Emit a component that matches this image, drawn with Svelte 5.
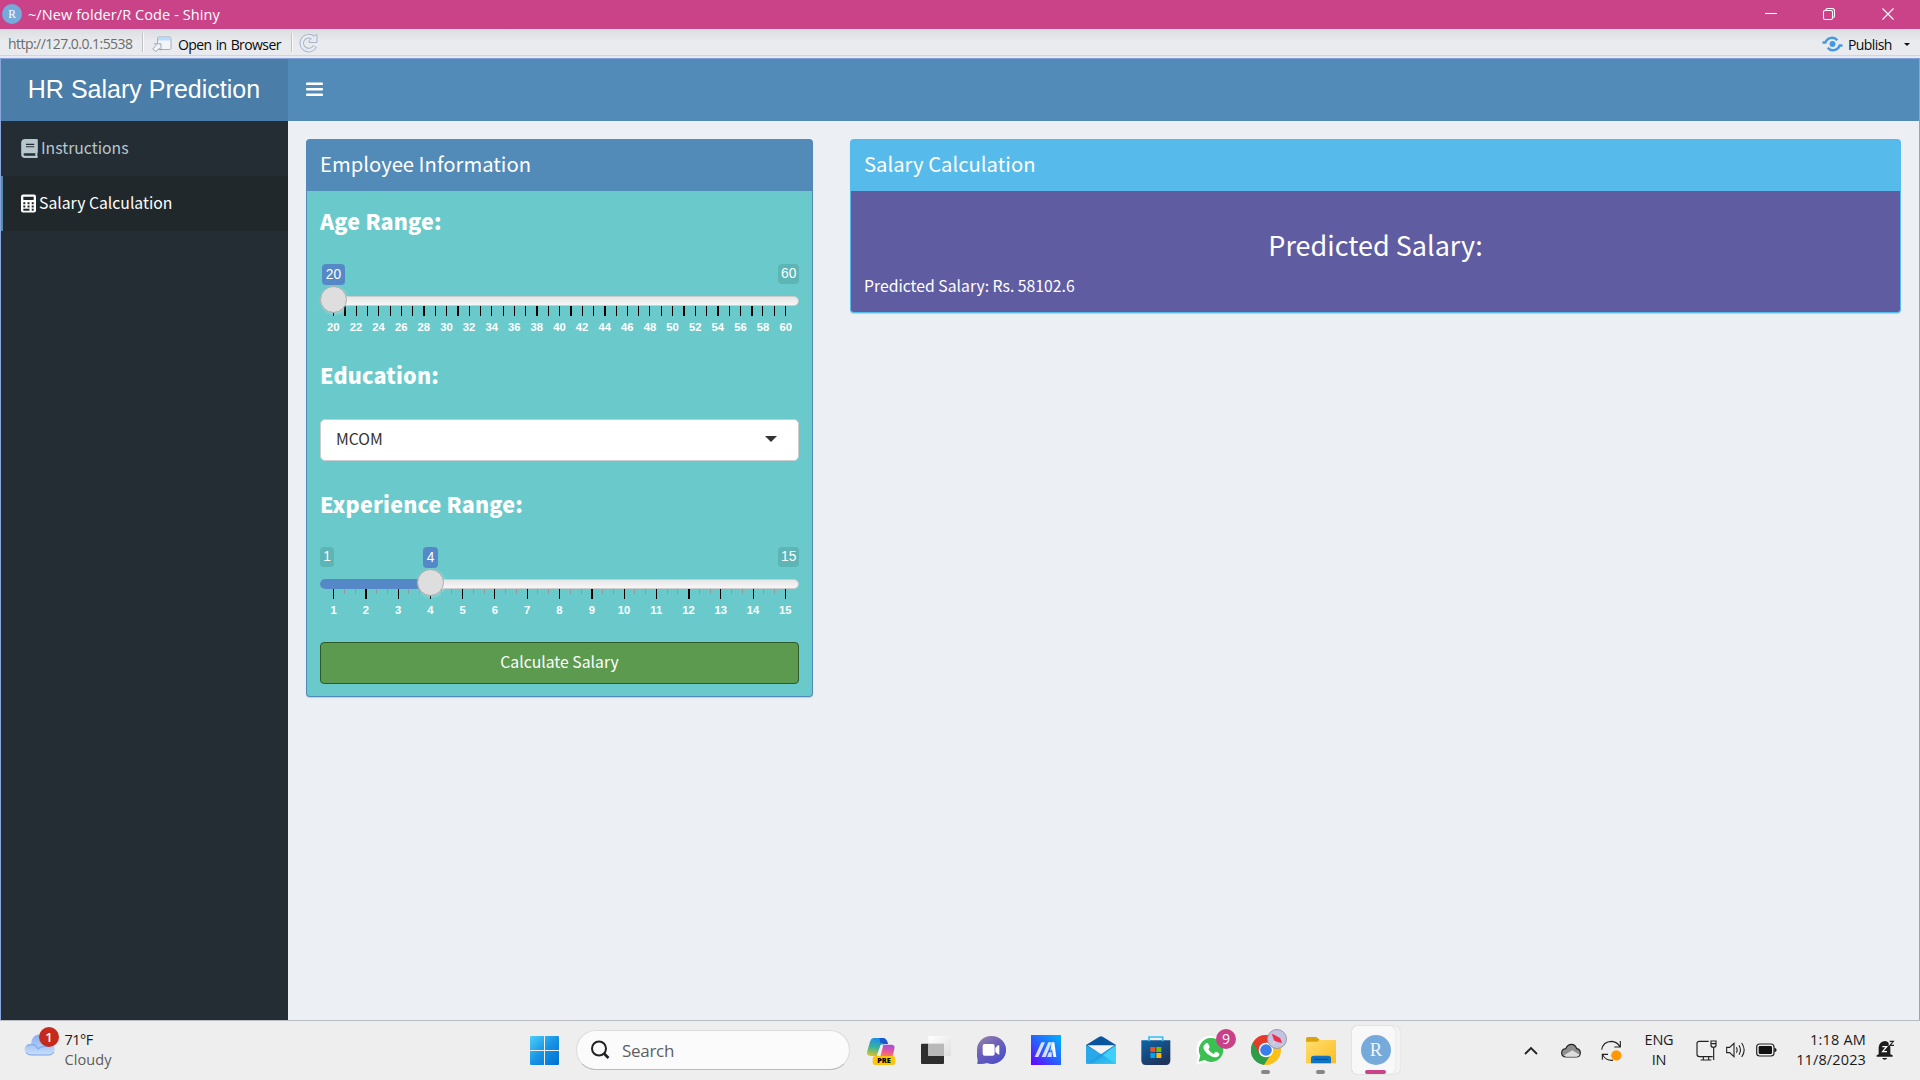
<script>
  const ageTicks = Array.from({ length: 41 }, (_, i) => i);
  const ageWide = [1, 8, 11, 18, 21, 24, 31, 34, 37];
  const ageLabels = Array.from({ length: 21 }, (_, i) => 20 + i * 2);
  const expTicks = Array.from({ length: 43 }, (_, i) => i);
  const expWide = [3, 24, 33];
  const expLabels = Array.from({ length: 15 }, (_, i) => i + 1);
</script>

<div class="screen">
  <header class="titlebar">
    <svg class="rlogo" viewBox="0 0 20 20"><circle cx="10" cy="10" r="10" fill="#75aadb" /><text x="10" y="14" text-anchor="middle" font-size="11.5" fill="#fff">R</text></svg>
    <span class="wintitle">~/New folder/R Code - Shiny</span>
    <svg class="winctl" viewBox="0 0 140 29" fill="none" stroke="#fff" stroke-width="1.1">
      <path d="M5 13.5H17" />
      <rect x="63.5" y="10.5" width="9" height="9" rx="1.5" />
      <path d="M66 10V9.500Q66 8.500 67.500 8.500H72Q74.500 8.500 74.500 11V16Q74.500 17.500 73 17.500" />
      <path d="M122.500 8.500L133.500 19.500M133.500 8.500L122.500 19.500" />
    </svg>
  </header>

  <div class="toolbar">
    <span class="url">http://127.0.0.1:5538</span>
    <i class="sep"></i>
    <svg class="open-ico" viewBox="0 0 20 16">
      <rect x="5.500" y="1" width="13.500" height="12.500" rx="1.500" fill="#f3f5f8" stroke="#a0adbd" />
      <rect x="6" y="1.500" width="12.500" height="3" fill="#b9dcfa" />
      <path d="M.700 13L4.200 9.500L2.500 7.800H9V14.200L7.300 12.500L3.700 15.500Z" fill="#f2f4f7" stroke="#95a1b0" stroke-width=".9" />
    </svg>
    <span class="open">Open in Browser</span>
    <i class="sep second"></i>
    <svg class="reload" viewBox="0 0 20 20" fill="none">
      <path d="M14.500 5A7 7 0 1 0 16 13.300" stroke="#a9b5c6" stroke-width="4.600" />
      <path d="M18 1.500V9.500H10V7.500L12.500 5.500L15 3Z" fill="#e3eaf4" stroke="#a9b5c6" />
      <path d="M14 4.600A7 7 0 1 0 15.700 13.800" stroke="#e7edf6" stroke-width="2.600" />
    </svg>
    <div class="publish">
      <svg class="pub-ico" viewBox="0 0 22 16" fill="none" stroke="#4499e6" stroke-width="2.600">
        <path d="M.500 6.500H3.500C6 .500 13 .200 16 4" /><path d="M21.500 9.500H18.500C16 15.500 9 15.800 6 12" />
        <circle cx="11" cy="8" r="3.100" fill="#4499e6" stroke="none" />
      </svg>
      <span class="pub">Publish</span>
      <i class="tiny-caret"></i>
    </div>
  </div>

  <main class="app">
    <nav class="side">
      <div class="brand">HR Salary Prediction</div>
      <div class="item">
        <svg viewBox="0 0 448 512" width="17" height="19" fill="currentColor"><path d="M448 360V24c0-13.300-10.700-24-24-24H96C43 0 0 43 0 96v320c0 53 43 96 96 96h328c13.300 0 24-10.700 24-24v-16c0-7.500-3.500-14.300-8.900-18.700-4.200-15.400-4.200-59.300 0-74.700 5.400-4.300 8.900-11.100 8.900-18.600zM128 134c0-3.300 2.700-6 6-6h212c3.300 0 6 2.700 6 6v20c0 3.300-2.700 6-6 6H134c-3.300 0-6-2.700-6-6v-20zm0 64c0-3.300 2.700-6 6-6h212c3.300 0 6 2.700 6 6v20c0 3.300-2.700 6-6 6H134c-3.300 0-6-2.700-6-6v-20zm253.400 250H96c-17.700 0-32-14.300-32-32 0-17.600 14.400-32 32-32h285.400c-1.900 17.100-1.900 46.900 0 64z" /></svg>
        <span class="t-ins">Instructions</span>
      </div>
      <div class="item active">
        <svg viewBox="0 0 15 19" width="15" height="19"><rect y=".5" width="15" height="18" rx="2" fill="#fff" /><g fill="#1e282c"><rect x="2.300" y="2.700" width="10.400" height="3.200" rx=".4" /><rect x="2.300" y="8.200" width="2" height="2" /><rect x="6.500" y="8.200" width="2" height="2" /><rect x="10.700" y="8.200" width="2" height="2" /><rect x="2.300" y="11.500" width="2" height="2" /><rect x="6.500" y="11.500" width="2" height="2" /><rect x="10.700" y="11.500" width="2" height="2" /><rect x="2.300" y="14.700" width="6.200" height="2" /><rect x="10.700" y="14.700" width="2" height="2" /></g></svg>
        <span class="t-sal">Salary Calculation</span>
      </div>
    </nav>

    <div class="right">
      <div class="navbar"><svg width="17" height="15" viewBox="0 0 17 15" fill="#fff"><rect y=".5" width="17" height="2.500" rx=".8" /><rect y="6" width="17" height="2.500" rx=".8" /><rect y="11.500" width="17" height="2.500" rx=".8" /></svg></div>
      <div class="content">
        <section class="box employee">
          <h3 class="bh">Employee Information</h3>
          <div class="body">
            <h4 class="lbl age">Age Range:</h4>
            <div class="slider">
              <div class="bubbles"><span class="cur b-age">20</span><span class="lim end">60</span></div>
              <div class="track"><i class="handle h-age"></i></div>
              <svg class="ticks" width="479" height="10" shape-rendering="crispEdges">
                {#each ageTicks as i}
                  <rect x={Math.floor(13.5 + i * 11.3)} y="0" width={ageWide.includes(i) ? 2 : 1} height="10" fill="#000" />
                {/each}
              </svg>
              <div class="nums n21">{#each ageLabels as n}<span>{n}</span>{/each}</div>
            </div>
            <h4 class="lbl edu">Education:</h4>
            <div class="select"><span>MCOM</span><i class="caret"></i></div>
            <h4 class="lbl exp">Experience Range:</h4>
            <div class="slider">
              <div class="bubbles"><span class="lim">1</span><span class="cur b-exp">4</span><span class="lim end">15</span></div>
              <div class="track"><i class="fill"></i><i class="handle h-exp"></i></div>
              <svg class="ticks" width="479" height="10" shape-rendering="crispEdges">
                {#each expTicks as i}
                  <rect x={Math.floor(13.5 + i * 10.762)} y="0" width={expWide.includes(i) ? 2 : 1} height={i % 3 ? 5 : 10} fill={i % 3 ? '#999' : '#000'} />
                {/each}
              </svg>
              <div class="nums n15">{#each expLabels as n}<span>{n}</span>{/each}</div>
            </div>
            <button class="calc">Calculate Salary</button>
          </div>
        </section>

        <section class="box result">
          <h3 class="bh">Salary Calculation</h3>
          <div class="body">
            <h2>Predicted Salary:</h2>
            <p>Predicted Salary: Rs. 58102.6</p>
          </div>
        </section>
      </div>
    </div>
  </main>

  <footer class="taskbar">
    <div class="weather">
      <svg width="32" height="32" viewBox="0 0 96 96">
        <defs><linearGradient id="cl" x1="0" y1="0" x2="0" y2="1"><stop offset="0" stop-color="#88aef0" /><stop offset="1" stop-color="#c8defa" /></linearGradient></defs>
        <path d="M22 56C20 32 40 20 56 28C70 32 74 42 74 52C88 54 92 64 92 70C92 82 84 88 76 88H20C8 88 2 80 2 70C2 60 10 54 22 56Z" fill="url(#cl)" />
        <path d="M8 60C20 50 36 56 42 68C50 62 62 60 74 62" fill="none" stroke="#6f9be8" stroke-width="4" opacity=".7" />
        <path d="M6 80Q12 87 22 87H76Q86 86 90 78" fill="none" stroke="#7aa5ea" stroke-width="3" />
      </svg>
      <b class="wbadge">1</b>
      <div class="wtext"><span class="deg">71°F</span><span class="dim">Cloudy</span></div>
    </div>

    <div class="start">
      <svg width="29" height="29" viewBox="0 0 87 87"><defs><linearGradient id="wn" x1="0" y1="0" x2="1" y2="1" ><stop offset="0" stop-color="#4cd0fb" /><stop offset=".5" stop-color="#1793e4" /><stop offset="1" stop-color="#0070d0" /></linearGradient></defs><path d="M2 0H42V42H0V2ZM45 0H85L87 2V42H45ZM0 45H42V87H2L0 85ZM45 45H87V85L85 87H45Z" fill="url(#wn)" /></svg>
    </div>
    <div class="search">
      <svg width="20" height="20" viewBox="0 0 20 20" fill="none" stroke="#222"><circle cx="9" cy="8.500" r="7" stroke-width="2" /><path d="M14 13.500L18.500 18" stroke-width="2.600" /></svg>
      <span>Search</span>
    </div>

    <div class="apps">
      <div class="cell">
        <svg width="30" height="30" viewBox="0 0 90 90">
          <defs>
            <linearGradient id="c1" x1=".3" y1="0" x2=".1" y2="1"><stop offset="0" stop-color="#1c8fe8" /><stop offset=".5" stop-color="#3db39a" /><stop offset="1" stop-color="#e6c31e" /></linearGradient>
            <linearGradient id="c2" x1=".5" y1="0" x2=".3" y2="1"><stop offset="0" stop-color="#a54de0" /><stop offset=".5" stop-color="#e0549f" /><stop offset="1" stop-color="#ff7a5c" /></linearGradient>
          </defs>
          <path d="M22 9H52Q62 10 66 27H55Q48 27 45 36L38 63H14Q0 62 4 48L12 20Q15 10 22 9Z" fill="url(#c1)" />
          <path d="M40 9H52Q62 10 66 27H52Q46 20 44 27Z" fill="#1b57cf" />
          <path d="M50 29H76Q88 29 85 42L80 63H42Z" fill="url(#c2)" />
          <path d="M44 29H52L44 62H32Z" fill="#efeef0" />
          <rect x="20" y="63" width="68" height="27" rx="8" fill="#fdc40c" />
          <text x="54" y="85" text-anchor="middle" class="pre" font-size="22">PRE</text>
        </svg>
      </div>
      <div class="cell">
        <svg width="30" height="30" viewBox="0 0 90 90">
          <defs><linearGradient id="tv" x1="0" y1="0" x2="1" y2="1"><stop offset="0" stop-color="#fff" /><stop offset="1" stop-color="#dedede" /></linearGradient></defs>
          <rect x="0" y="26" width="69" height="61" rx="3" fill="#2e2e2e" /><rect x="22" y="3" width="68" height="60" rx="2" fill="url(#tv)" />
          <rect x="22" y="26" width="47" height="37" fill="#b9b9b9" />
        </svg>
      </div>
      <div class="cell">
        <svg width="30" height="30" viewBox="0 0 90 90">
          <defs><linearGradient id="mt" x1="0" y1="0" x2=".6" y2="1"><stop offset="0" stop-color="#9c84a8" /><stop offset=".5" stop-color="#6b62b8" /><stop offset="1" stop-color="#504fc9" /></linearGradient></defs>
          <path d="M45 3A42 42 0 1 1 33 84Q22 88 3 86Q7 78 3 66L3 45A42 42 0 0 1 45 3Z" fill="url(#mt)" />
          <rect x="20" y="27" width="36" height="35" rx="6" fill="#fff" /><path d="M58 39L66 31Q70 29 70 34V56Q70 61 66 58L58 51Z" fill="#fff" />
        </svg>
      </div>
      <div class="cell">
        <svg width="30" height="30" viewBox="0 0 90 90">
          <defs><linearGradient id="as" x1="0" y1="1" x2="1" y2="0"><stop offset="0" stop-color="#6a00ff" /><stop offset=".5" stop-color="#2664ff" /><stop offset="1" stop-color="#00b4ff" /></linearGradient></defs>
          <rect width="90" height="90" fill="url(#as)" />
          <path d="M31 22H42L22 66H11ZM52 22H62L44 66H32Z" fill="#fff" opacity=".8" /><path d="M62 22H70L76 66H67L63 42L58 50Z" fill="#fff" opacity=".95" /><path d="M54 52H62V66H48Z" fill="#fff" opacity=".8" />
        </svg>
      </div>
      <div class="cell">
        <svg width="30" height="30" viewBox="0 0 90 90">
          <defs><linearGradient id="ml" x1="0" y1="0" x2="1" y2="1"><stop offset="0" stop-color="#1581d8" /><stop offset="1" stop-color="#2ec4f6" /></linearGradient></defs>
          <path d="M0 30L40 5Q45 2 50 5L90 30V50H0Z" fill="#0a569e" /><path d="M4 31H86L45 58Z" fill="#f4f4f4" />
          <path d="M0 30L45 57L90 30V86H0Z" fill="#2aa9ea" /><path d="M90 30L20 86H90Z" fill="#3fd0fa" /><path d="M0 86L45 57L90 86Z" fill="url(#ml)" opacity=".7" />
        </svg>
      </div>
      <div class="cell">
        <svg width="30" height="30" viewBox="0 0 90 90">
          <defs><linearGradient id="st" x1="0" y1="0" x2=".6" y2="1"><stop offset="0" stop-color="#0c66a8" /><stop offset="1" stop-color="#20335c" /></linearGradient></defs>
          <path d="M1 16H88V76Q88 90 75 90H14Q1 90 1 76Z" fill="url(#st)" /><path d="M24 19V6H65V19" fill="none" stroke="#37bdf3" stroke-width="5" />
          <path d="M28 36H43V51H28Z" fill="#f25022" /><path d="M46 36H61V51H46Z" fill="#7fba00" /><path d="M28 54H43V69H28Z" fill="#00a4ef" /><path d="M46 54H61V69H46Z" fill="#ffb900" />
        </svg>
      </div>
      <div class="cell">
        <svg width="30" height="30" viewBox="0 0 90 90">
          <path d="M46 3A41 41 0 1 1 25 82L0 89L7 65A41 41 0 0 1 46 3Z" fill="#fff" /><path d="M46 9A36 36 0 1 1 26 75L8 80L13 62A36 36 0 0 1 46 9Z" fill="#3bc052" />
          <path d="M30 25Q35 22 37 27L41 36Q41 39 37 43Q43 54 53 57L58 51Q61 49 69 55Q72 57 68 63Q61 70 49 65Q31 58 23 42Q20 32 30 25Z" fill="#fff" />
        </svg>
        <span class="nine">9</span>
      </div>
      <div class="cell">
        <svg width="30" height="30" viewBox="0 0 90 90">
          <circle cx="45" cy="45" r="45" fill="#fbc116" /><path d="M45 45L6 22A45 45 0 0 0 39 90L58 60Z" fill="#2d9d47" />
          <path d="M6 22A45 45 0 0 1 84 23H45V45L25 56Z" fill="#e33b2e" /><circle cx="45" cy="45" r="22" fill="#fff" /><circle cx="45" cy="45" r="17.500" fill="#3b7ded" />
        </svg>
        <svg class="profile" width="20" height="20" viewBox="0 0 60 60"><circle cx="30" cy="30" r="28.500" fill="#c3c4e2" stroke="#979aa8" stroke-width="3" /><path d="M14 15L22 17L40 28L45 42L34 40L22 35Z" fill="#f02f4c" /><path d="M24 36L18 46" stroke="#eee" stroke-width="2" /></svg>
        <i class="run"></i>
      </div>
      <div class="cell">
        <svg width="30" height="30" viewBox="0 0 90 90">
          <defs><linearGradient id="fd" x1="0" y1="0" x2="1" y2="1"><stop offset="0" stop-color="#ffdf70" /><stop offset="1" stop-color="#fcbc22" /></linearGradient></defs>
          <path d="M0 12Q0 6 6 6H28Q32 6 36 10L42 16V30H0Z" fill="#dba20e" /><path d="M0 20H34L40 15H90V85H0Z" fill="url(#fd)" />
          <path d="M15 85V70Q15 62 23 62H67Q75 62 75 70V85Z" fill="#0f74c4" /><path d="M25 73H65" stroke="#074b85" stroke-width="3" />
        </svg>
        <i class="run"></i>
      </div>
      <div class="cell">
        <i class="tile back"></i><i class="tile"></i>
        <svg class="front" width="30" height="30" viewBox="0 0 30 30"><circle cx="15" cy="15" r="15" fill="#75aadb" /><text x="15" y="20.800" text-anchor="middle" font-size="18.500" fill="#f2f6fa">R</text></svg>
        <i class="run on"></i>
      </div>
    </div>

    <div class="tray">
      <div class="ti"><svg width="14" height="9" viewBox="0 0 14 9" fill="none" stroke="#222" stroke-width="1.800"><path d="M1 8L7 2L13 8" /></svg></div>
      <div class="ti"><svg width="20" height="15" viewBox="0 0 60 45"><path d="M15 42Q2 41 2 29Q3 18 14 17Q20 3 33 4Q44 6 47 17Q58 19 58 30Q57 42 46 42Z" fill="#8f8f8f" stroke="#222" stroke-width="3.500" /><path d="M9 37L34 22L56 35Q52 41 46 41H15Z" fill="#dcdcdc" /></svg></div>
      <div class="ti"><svg width="21" height="21" viewBox="0 0 63 63" fill="none" stroke="#222" stroke-width="3.300"><path d="M2 29Q6 5 32 4Q48 5 57 20M58 3V21H40" /><path d="M36 61Q12 62 5 44M4 59V43H21" /><circle cx="46" cy="46" r="15.500" fill="#ff9800" stroke="none" /></svg></div>
      <div class="lang"><span>ENG</span><span>IN</span></div>
      <div class="ti s"><svg width="21" height="21" viewBox="0 0 63 63" fill="none" stroke="#222" stroke-width="3.500"><path d="M38 4H10Q3 4 3 10V43Q3 50 10 50H50M22 50V60M38 50V60M14 60H46" /><path d="M45 3H60V16Q60 22 52 22Q45 22 45 16ZM53 22V60M45 11H60" /></svg></div>
      <div class="ti s"><svg width="20" height="18" viewBox="0 0 60 54" fill="none" stroke="#222" stroke-width="3.300"><path d="M2 19H11L24 7V47L11 35H2Z" /><path d="M31 19Q36 27 31 35M39 13Q48 27 39 41M47 6Q62 27 47 48" /></svg></div>
      <div class="ti s"><svg width="21" height="14" viewBox="0 0 63 42"><rect x="2" y="3" width="52" height="36" rx="9" fill="none" stroke="#222" stroke-width="3.500" /><rect x="8" y="9" width="40" height="24" rx="4" fill="#111" /><path d="M55 14Q62 15 62 21Q62 27 55 28Z" fill="#222" /></svg></div>
      <div class="clock"><span class="time">1:18 AM</span><span>11/8/2023</span></div>
      <div class="ti bell"><svg width="19" height="20" viewBox="0 0 57 60"><path d="M8 43V22Q10 4 28 3Q42 5 43 22V43L50 46V50H2V46Z" fill="#1c1c1c" /><path d="M18 54H34Q31 59 26 59Q21 59 18 54Z" fill="#1c1c1c" /><path d="M38 1H57V18H38Z" fill="#eee" /><path d="M19 20H32L20 35H33" fill="none" stroke="#fff" stroke-width="4" /><path d="M41 4H52L42 16H54" fill="none" stroke="#222" stroke-width="3.500" /></svg></div>
    </div>
  </footer>
</div>

<style>
  :global(body) { margin: 0; overflow: hidden; }
  * { box-sizing: border-box; }
  h2, h3, h4, p { margin: 0; }
  i { display: block; flex: none; }
  svg { display: block; flex: none; }
  svg text { font-family: "Liberation Serif", serif; }
  svg text.pre { font-family: "Open Sans", sans-serif; font-weight: 800; }
  span { white-space: nowrap; }
  .screen { width: 1920px; height: 1080px; display: flex; flex-direction: column; background: #ecf0f5; font-family: "Open Sans", sans-serif; overflow: hidden; }

  .titlebar { height: 29px; flex: none; background: #ca4389; display: flex; align-items: center; padding-left: 2px; color: #fff; }
  .rlogo { width: 20px; height: 20px; margin-top: -1px; }
  .wintitle { font-size: 14.5px; line-height: 29px; margin-left: 6px; letter-spacing: 0.08px; }
  .winctl { width: 140px; height: 29px; margin-left: auto; margin-right: 20px; }

  .toolbar { height: 30px; flex: none; background: linear-gradient(#dcdde1, #e9ebee 45%, #e9ebee); display: flex; align-items: center; padding: 0 0 3px 8px; border-bottom: 1px solid #849fd6; box-shadow: inset 0 -2px 0 #e6e8f2, inset 0 -3px 0 #d2d4dc; }
  .url { width: 126px; margin-top: 3px; font-size: 14px; line-height: 26px; color: #6c6c6c; letter-spacing: -0.54px; }
  .sep { width: 2px; height: 19px; background: linear-gradient(90deg, #c0c2c6 50%, #fafafa 50%); margin-left: 8px; }
  .open-ico { width: 20px; height: 16px; margin-left: 8px; margin-top: 4px; }
  .open { width: 106px; margin: 6px 0 0 6px; font-size: 14px; line-height: 26px; color: #0a0a0a; letter-spacing: -0.58px; word-spacing: 1px; }
  .sep.second { margin-left: 7px; }
  .reload { width: 20px; height: 20px; margin-left: 6px; margin-top: 2px; }
  .publish { margin-left: auto; display: flex; align-items: center; width: 98px; }
  .pub-ico { width: 21px; height: 16px; margin-top: 4px; }
  .pub { width: 50px; margin: 6px 0 0 5px; font-size: 14px; line-height: 26px; color: #0a0a0a; letter-spacing: -0.6px; }
  .tiny-caret { border: 3px solid transparent; border-top: 3.500px solid #111; border-bottom: 0; margin: 4px 0 0 6px; }

  .app { height: 961px; flex: none; display: flex; border-left: 1px solid #8ba5db; border-right: 1px solid #8ba5db; font-family: "Noto Sans CJK SC", sans-serif; font-size: 15.75px; }
  .side { width: 287px; flex: none; background: #242d33; }
  .brand { height: 62px; background: #4a7da7; color: #fff; font: 25px/61px "Liberation Sans", sans-serif; text-align: center; letter-spacing: 0.02px; padding-right: 1px; }
  .item { height: 55px; display: flex; align-items: center; padding-left: 20px; color: #b8c7ce; gap: 3px; line-height: 24px; }
  .item span { margin-top: -2px; }
  .item.active { background: #20282b; border-left: 2px solid #528ab7; padding-left: 18px; color: #fff; }
  .right { flex: 1; min-width: 0; }
  .navbar { height: 62px; background: #528ab8; display: flex; align-items: center; padding: 0 0 1px 17.5px; }
  .content { display: flex; align-items: flex-start; gap: 37px; padding: 18px 18px 0; }
  .box { border-radius: 4px; box-shadow: 0 1px 1px rgba(0, 0, 0, .15); color: #fff; }
  .bh { height: 52px; font-size: 20.250px; line-height: 49px; font-weight: 400; padding-left: 14px; }
  .employee { width: 507px; height: 558px; background: #528ab8; }
  .employee .body { margin: 0 1px; height: 505px; background: #6acacb; border-radius: 0 0 3px 3px; padding: 0 13px; display: flex; flex-direction: column; }
  .result { width: 1051px; height: 174px; background: #56bbeb; }
  .result .body { margin: 0 1px; height: 121px; background: #5f5ca1; border-radius: 0 0 3px 3px; padding: 34px 13px 0; }
  h2 { font-size: 27px; font-weight: 400; line-height: 40px; text-align: center; }
  p { line-height: 24px; margin-top: 9px; }
  .lbl { font-size: 21.500px; line-height: 30px; font-weight: 900; letter-spacing: 0.18px; }
  .lbl.age { margin: 15px 0 28px; }
  .lbl.edu { margin-top: 23px; }
  .lbl.exp { margin: 28px 0; }
  .slider { height: 73px; font-family: "Liberation Sans", sans-serif; }
  .bubbles { height: 32px; display: flex; position: relative; }
  .bubbles span { border-radius: 4px; font-size: 13.750px; text-align: center; }
  .lim { height: 20px; line-height: 20px; background: #5db5b6; min-width: 14px; padding: 0 3px; }
  .lim.end { margin-left: auto; width: 21px; }
  .cur { height: 21px; line-height: 21px; background: #5588c7; }
  .b-age { width: 23px; margin-left: 2px; }
  .b-exp { width: 15px; margin-left: 89px; }
  .track { height: 10px; border-radius: 8px; border: 1px solid #ccc; background: linear-gradient(#dedede -50%, #fff 150%); position: relative; }
  .fill { width: 111px; height: 10px; margin: -1px; background: #5588c7; border-radius: 8px 0 0 8px; }
  .handle { position: absolute; top: -11px; width: 27px; height: 27px; border-radius: 50%; border: 1px solid #ababab; background: #dedede; box-shadow: 1px 1px 3px rgba(255, 255, 255, .3); }
  .h-age { left: -1px; }
  .h-exp { left: 96px; }
  .nums { display: grid; font-size: 11.250px; font-weight: 700; line-height: 12px; margin-top: 5px; text-align: center; }
  .n21 { grid-template-columns: repeat(21, 1fr); margin-left: 2px; margin-right: 2px; }
  .n15 { grid-template-columns: repeat(15, 1fr); margin-left: -2.500px; margin-right: -2.500px; }
  .select { height: 42px; margin-top: 29px; background: #fff; border: 1px solid #ccc; border-radius: 5px; color: #333; display: flex; align-items: center; justify-content: space-between; padding: 0 21px 3px 15px; line-height: 24px; }
  .caret { border: 6px solid transparent; border-top-color: #333; border-bottom: 0; margin-top: 1px; }
  .calc { height: 42px; margin: 22px 0 0; padding: 0 0 2px; background: #5c9a4f; border: 1px solid #2c5a2b; border-radius: 4px; color: #fff; font: 15.750px/24px "Noto Sans CJK SC", sans-serif; }

  .taskbar { height: 60px; flex: none; border-top: 1px solid #b9bcc2; background: #eee; display: flex; align-items: center; color: #1b1b1b; font-size: 14.5px; }
  .weather { width: 524px; height: 59px; display: flex; padding: 5px 0 0 24px; position: relative; }
  .wbadge { position: absolute; left: 39px; top: 6px; width: 20px; height: 20px; border-radius: 50%; background: #c42b1c; color: #fff; font-size: 13px; font-weight: 600; line-height: 20px; text-align: center; }
  .wtext { margin: 4px 0 0 8.500px; display: flex; flex-direction: column; line-height: 20px; }
  .deg { letter-spacing: -0.5px; }
  .dim { color: #5c5c5c; letter-spacing: 0.1px; }
  .start { width: 41px; display: flex; justify-content: center; }
  .search { width: 274px; height: 40px; margin: -1px 3px 0 11px; border-radius: 20px; background: #fbfbfb; border: 1px solid #dcdcdc; border-bottom-color: #bbb; display: flex; align-items: center; padding-left: 13px; gap: 12px; color: #5f5f5f; font-size: 17px; }
  .search span { letter-spacing: -0.3px; }
  .apps { display: flex; margin-top: -1px; }
  .cell { width: 55px; height: 59px; display: flex; align-items: center; justify-content: center; position: relative; }
  .nine { position: absolute; left: 33px; top: 8px; width: 20px; height: 20px; border-radius: 50%; background: #c93f88; color: #fff; font-size: 14px; line-height: 20px; text-align: center; }
  .profile { position: absolute; left: 29px; top: 8px; }
  .run { position: absolute; left: 23px; top: 49px; width: 9px; height: 4px; border-radius: 2px; background: #868686; }
  .run.on { left: 17px; width: 21px; background: #ca4389; }
  .tile { position: absolute; left: 4px; top: 5px; width: 43px; height: 48px; border-radius: 5px; background: #f8f8f8; box-shadow: 0 0 1px #bbb; }
  .tile.back { width: 48px; background: #f3f3f3; }
  .front { position: relative; }
  .tray { margin-left: auto; width: 409px; display: flex; align-items: center; margin-top: -1px; }
  .ti { width: 40px; display: flex; justify-content: center; }
  .ti.s { width: 30px; }
  .ti.bell { width: 38px; }
  .lang { width: 56px; margin-right: 4px; display: flex; flex-direction: column; align-items: center; line-height: 20px; letter-spacing: -0.2px; }
  .clock { width: 85px; display: flex; flex-direction: column; align-items: flex-end; line-height: 20px; letter-spacing: 0.13px; }
  .time { letter-spacing: 0.2px; }
</style>
